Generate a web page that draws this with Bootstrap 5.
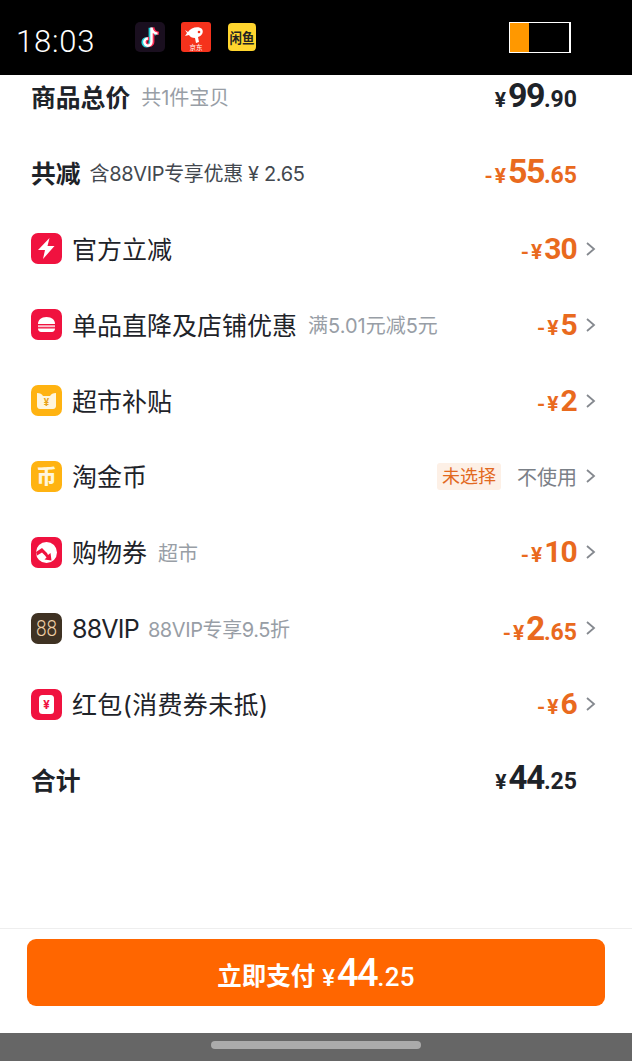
<!DOCTYPE html>
<html lang="zh-CN">
<head>
    <meta charset="UTF-8">
    <meta name="viewport" content="width=device-width, initial-scale=1.0">
    <title>立即支付</title>
    <link href="https://cdn.jsdelivr.net/npm/bootstrap@5.3.0/dist/css/bootstrap.min.css" rel="stylesheet">
    <style>
        html, body { height: 100%; }
        body {
            font-family: Inter, "Noto Sans CJK SC", sans-serif;
            color: #1e2329;
            background: #fff;
        }
        .phone { height: 1061px; overflow: hidden; }

        .status-strip { height: 75px; background: #000; padding: 22px 61px 0 16px; flex: none; position: relative; z-index: 2; }
        .clock { font-family: Roboto, sans-serif; font-weight: 300; font-size: 31px; color: #fff; letter-spacing: .8px; line-height: 40px; width: 119px; }
        .app-icon { display: block; flex: none; }
        .batt { width: 62px; height: 31px; border: 1px solid #fff; border-right-width: 2px; margin-left: auto; }
        .batt-fill { background: #ff9800; height: 100%; }

        .fee-scroll { flex: 1 1 auto; overflow: hidden; min-height: 0; }
        .fee-list { margin-top: -16px; }
        .fee-row { height: 75.9px; padding: 0 36px 0 31px; }
        .fee-name { font-size: 25px; line-height: 1; white-space: nowrap; padding-top: 3px; }
        .fee-name-bold { font-weight: 700; font-size: 24.8px; }
        .fee-note { font-size: 20px; color: #989ea6; margin-left: 11px; white-space: nowrap; line-height: 1; padding-top: 3px; }
        .fee-note-dark { color: #43484f; margin-left: 9px; letter-spacing: -.35px; }
        .fee-note-tight { letter-spacing: -.4px; margin-left: 9px; }
        .fee-name-tight { letter-spacing: -.8px; }
        .fee-name-wide { letter-spacing: .35px; }
        .fee-icon { width: 31px; height: 31px; margin-right: 10px; flex: none; display: block; }

        .amt { font-family: Roboto, sans-serif; font-weight: 700; white-space: nowrap; line-height: 1; color: #1e2329; display: flex; align-items: baseline; }
        .amt-off { color: #e96a1e; }
        .amt-lift { padding-bottom: 4px; }
        .amt-yen { font-size: 21px; letter-spacing: 2px; }
        .amt-big { font-size: 30px; letter-spacing: -.8px; }
        .amt-huge { font-size: 34px; letter-spacing: -1.5px; }
        .amt-mid { font-size: 33px; letter-spacing: -1.2px; }
        .amt-dec { font-size: 23px; }
        .chev { width: 11px; height: 16px; margin-left: 8px; flex: none; display: block; }
        .chev-none { visibility: hidden; }

        .unpicked { font-size: 18px; color: #e2691f; background: #fdf0e6; border-radius: 3px; padding: 0 5px; line-height: 27px; height: 27px; margin-right: 16px; }
        .not-used { font-size: 20px; color: #7b8087; line-height: 1; padding-top: 3px; }

        .pay-bar { flex: none; height: 105px; border-top: 1px solid #eeeeee; padding: 10px 27px 0; }
        .pay-btn {
            width: 100%; height: 67px; border: 0; border-radius: 9px; background: #ff6600; color: #fff;
            font-weight: 700; font-size: 24.500px; padding: 0; line-height: 1;
        }
        .pay-btn:hover, .pay-btn:active { background: #ff6600 !important; color: #fff !important; }
        .pay-btn .amt { color: #fff; font-weight: 500; }
        .pay-btn .amt-huge { font-size: 38px; letter-spacing: -1.500px; }
        .pay-btn .amt-dec { font-size: 26px; letter-spacing: .3px; }
        .pay-btn .amt-yen { letter-spacing: 2px; font-size: 24px; }
        .pay-label { margin-right: 7px; padding-top: 8px; }

        .home-strip { flex: none; height: 28px; background: #666; padding-top: 8px; }
        .home-pill { width: 210px; height: 8px; border-radius: 4px; background: #ababab; }
    </style>
</head>
<body>
    <div class="phone d-flex flex-column">

        <div class="status-strip d-flex align-items-start">
            <div class="clock">18:03</div>
            <svg class="app-icon" width="30" height="30" viewBox="0 0 30 30">
                <rect width="30" height="30" rx="5" fill="#1a0f1f"/>
                <g fill="none" stroke-width="3.200">
                    <path d="M16.500 5v14.500a3.600 3.600 0 1 1-3.600-3.600M16.500 5c.4 3.600 2.600 5.600 6 6" stroke="#25d4dc" transform="translate(-1.300 .8)"/>
                    <path d="M16.500 5v14.500a3.600 3.600 0 1 1-3.600-3.600M16.500 5c.4 3.600 2.600 5.600 6 6" stroke="#fe2c55" transform="translate(1.300 .4)"/>
                    <path d="M16.500 5v14.500a3.600 3.600 0 1 1-3.600-3.600M16.500 5c.4 3.600 2.600 5.600 6 6" stroke="#fff" stroke-width="2.400" transform="translate(0 .6)"/>
                </g>
            </svg>
            <svg class="app-icon ms-3" width="30" height="30" viewBox="0 0 30 30">
                <rect width="30" height="30" rx="3" fill="#f5321c"/>
                <path d="M7 10c3-5 11-6 14-3 2 3 0 7-4 8l1 5-3 1-1-5c-3 0-5-1-6-3l-4 1 2-3-2-3z" fill="#fff"/>
                <circle cx="18" cy="10" r="1.300" fill="#f5321c"/>
                <text x="15" y="28" text-anchor="middle" font-size="6.500" fill="#fff" font-family="Noto Sans CJK SC">京东</text>
            </svg>
            <svg class="app-icon" width="28" height="28" viewBox="0 0 28 28" style="margin:1px 0 0 17px">
                <rect width="28" height="28" rx="4" fill="#ffd52e"/>
                <text x="14" y="20" text-anchor="middle" font-size="13.500" font-weight="700" fill="#222" font-family="Noto Sans CJK SC" textLength="25" lengthAdjust="spacingAndGlyphs">闲鱼</text>
            </svg>
            <div class="batt"><div class="batt-fill" style="width: 32%"></div></div>
        </div>

        <div class="fee-scroll">
            <div class="fee-list">
                <div class="fee-row d-flex align-items-center">
                    <span class="fee-name fee-name-bold">商品总价</span>
                    <span class="fee-note">共1件宝贝</span>
                    <span class="amt amt-lift ms-auto"><span class="amt-yen">¥</span><span class="amt-huge">99</span><span class="amt-dec">.90</span></span>
                    <svg class="chev chev-none" viewBox="0 0 11 16"></svg>
                </div>
                <div class="fee-row d-flex align-items-center">
                    <span class="fee-name fee-name-bold">共减</span>
                    <span class="fee-note fee-note-dark">含88VIP专享优惠 ¥ 2.65</span>
                    <span class="amt amt-off amt-lift ms-auto"><span class="amt-yen">-¥</span><span class="amt-huge">55</span><span class="amt-dec">.65</span></span>
                    <svg class="chev chev-none" viewBox="0 0 11 16"></svg>
                </div>
                <div class="fee-row d-flex align-items-center">
                    <svg class="fee-icon" viewBox="0 0 31 31"><rect width="31" height="31" rx="7" fill="#f0123f"/><path d="M18.500 5L7 17h7l-2 9 11.500-13h-7z" fill="#fff"/></svg>
                    <span class="fee-name">官方立减</span>
                    <span class="amt amt-off ms-auto"><span class="amt-yen">-¥</span><span class="amt-big">30</span></span>
                    <svg class="chev" viewBox="0 0 11 16"><path d="M2 2l7 6-7 6" fill="none" stroke="#85898f" stroke-width="1.800"/></svg>
                </div>
                <div class="fee-row d-flex align-items-center">
                    <svg class="fee-icon" viewBox="0 0 31 31"><rect width="31" height="31" rx="7" fill="#f0123f"/><path d="M7 15c0-4 3-7 8.500-7S24 11 24 15z" fill="#fff"/><rect x="7" y="16.200" width="17" height="2" fill="#fff" opacity=".75"/><path d="M7 19.500h17c0 2-1.500 3.500-3 3.500H10c-1.500 0-3-1.500-3-3.500z" fill="#fff"/></svg>
                    <span class="fee-name">单品直降及店铺优惠</span>
                    <span class="fee-note">满5.01元减5元</span>
                    <span class="amt amt-off ms-auto"><span class="amt-yen">-¥</span><span class="amt-big">5</span></span>
                    <svg class="chev" viewBox="0 0 11 16"><path d="M2 2l7 6-7 6" fill="none" stroke="#85898f" stroke-width="1.800"/></svg>
                </div>
                <div class="fee-row d-flex align-items-center">
                    <svg class="fee-icon" viewBox="0 0 31 31"><rect width="31" height="31" rx="7" fill="#ffb311"/><path d="M6 8c3 0 5 1 6 3h7c1-2 3-3 6-3v13c0 1.500-1 3-3 3H9c-2 0-3-1.500-3-3z" fill="#fff6dc"/><text x="15.500" y="21" text-anchor="middle" font-size="10" font-weight="700" fill="#e8a317" font-family="Roboto">¥</text></svg>
                    <span class="fee-name">超市补贴</span>
                    <span class="amt amt-off ms-auto"><span class="amt-yen">-¥</span><span class="amt-big">2</span></span>
                    <svg class="chev" viewBox="0 0 11 16"><path d="M2 2l7 6-7 6" fill="none" stroke="#85898f" stroke-width="1.800"/></svg>
                </div>
                <div class="fee-row d-flex align-items-center">
                    <svg class="fee-icon" viewBox="0 0 31 31"><rect width="31" height="31" rx="7" fill="#ffb311"/><text x="15.500" y="23" text-anchor="middle" font-size="20" font-weight="900" fill="#fff6dc" font-family="Noto Sans CJK SC">币</text></svg>
                    <span class="fee-name">淘金币</span>
                    <span class="unpicked ms-auto">未选择</span>
                    <span class="not-used">不使用</span>
                    <svg class="chev" viewBox="0 0 11 16"><path d="M2 2l7 6-7 6" fill="none" stroke="#85898f" stroke-width="1.800"/></svg>
                </div>
                <div class="fee-row d-flex align-items-center">
                    <svg class="fee-icon" viewBox="0 0 31 31"><rect width="31" height="31" rx="7" fill="#f0123f"/><circle cx="15.500" cy="15.500" r="10.500" fill="#fff"/><path d="M5 15l6-4 5 5 1 2 2.500-2 1 7.500-7-1 2-2-1.500-2-3-3-5 3z" fill="#f0123f"/></svg>
                    <span class="fee-name">购物券</span>
                    <span class="fee-note">超市</span>
                    <span class="amt amt-off ms-auto"><span class="amt-yen">-¥</span><span class="amt-big">10</span></span>
                    <svg class="chev" viewBox="0 0 11 16"><path d="M2 2l7 6-7 6" fill="none" stroke="#85898f" stroke-width="1.800"/></svg>
                </div>
                <div class="fee-row d-flex align-items-center">
                    <svg class="fee-icon" viewBox="0 0 31 31"><rect width="31" height="31" rx="7" fill="#3f3223"/><text x="15.500" y="23" text-anchor="middle" font-size="22" fill="#f0cfa6" font-family="Roboto" font-weight="300" textLength="21" lengthAdjust="spacingAndGlyphs">88</text></svg>
                    <span class="fee-name fee-name-tight">88VIP</span>
                    <span class="fee-note fee-note-tight">88VIP专享9.5折</span>
                    <span class="amt amt-off ms-auto"><span class="amt-yen">-¥</span><span class="amt-mid">2</span><span class="amt-dec">.65</span></span>
                    <svg class="chev" viewBox="0 0 11 16"><path d="M2 2l7 6-7 6" fill="none" stroke="#85898f" stroke-width="1.800"/></svg>
                </div>
                <div class="fee-row d-flex align-items-center">
                    <svg class="fee-icon" viewBox="0 0 31 31"><rect width="31" height="31" rx="7" fill="#f0123f"/><rect x="8" y="6" width="15" height="19" rx="3.500" fill="#fff"/><text x="15.500" y="20" text-anchor="middle" font-size="12" font-weight="700" fill="#f0123f" font-family="Roboto">¥</text></svg>
                    <span class="fee-name fee-name-wide">红包(消费券未抵)</span>
                    <span class="amt amt-off ms-auto"><span class="amt-yen">-¥</span><span class="amt-big">6</span></span>
                    <svg class="chev" viewBox="0 0 11 16"><path d="M2 2l7 6-7 6" fill="none" stroke="#85898f" stroke-width="1.800"/></svg>
                </div>
                <div class="fee-row d-flex align-items-center">
                    <span class="fee-name fee-name-bold">合计</span>
                    <span class="amt amt-lift ms-auto"><span class="amt-yen">¥</span><span class="amt-mid">44</span><span class="amt-dec">.25</span></span>
                    <svg class="chev chev-none" viewBox="0 0 11 16"></svg>
                </div>
            </div>
        </div>

        <div class="pay-bar">
            <button type="button" class="btn pay-btn d-flex align-items-center justify-content-center">
                <span class="pay-label">立即支付</span>
                <span class="amt"><span class="amt-yen">¥</span><span class="amt-huge">44</span><span class="amt-dec">.25</span></span>
            </button>
        </div>

        <div class="home-strip d-flex justify-content-center">
            <div class="home-pill"></div>
        </div>
    </div>
    <script src="https://cdn.jsdelivr.net/npm/bootstrap@5.3.0/dist/js/bootstrap.bundle.min.js"></script>
</body>
</html>
